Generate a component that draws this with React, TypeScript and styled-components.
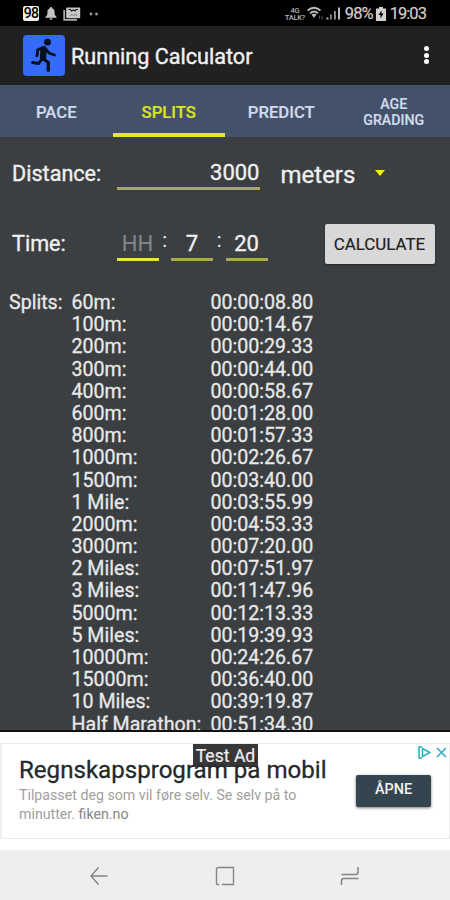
import React from "react";
import styled, { createGlobalStyle } from "styled-components";

const GlobalStyle = createGlobalStyle`
  * { box-sizing: border-box; }
  body { margin: 0; font-family: Roboto, "Liberation Sans", sans-serif; background: #3b3e41; }
`;

const Screen = styled.div`
  width: 450px;
  height: 900px;
  display: flex;
  flex-direction: column;
  overflow: hidden;
  background: #3b3f42;
  color: #f0f0f0;
`;

const StatusBar = styled.div`
  height: 26px;
  flex: none;
  display: flex;
  align-items: center;
  justify-content: space-between;
  padding: 1px 24px 0 23px;
  background: #000;
  color: #cfcfcf;
`;

const StatusGroup = styled.div<{ $gap: number }>`
  display: flex;
  align-items: center;
  gap: ${(p) => p.$gap}px;
`;

const BatteryBadge = styled.span`
  width: 16px;
  height: 15px;
  border-radius: 2px;
  background: #eee;
  color: #000;
  font: 500 14px/15px Roboto, sans-serif;
  text-align: center;
  letter-spacing: -0.6px;
`;

const StatusText = styled.span`
  font-size: 16.5px;
  line-height: 24px;
  letter-spacing: -0.95px;
  -webkit-text-stroke: 0.2px;
`;

const Volte = styled.span`
  display: flex;
  flex-direction: column;
  align-items: center;
  width: 18px;
  font-size: 7.5px;
  font-weight: 500;
  line-height: 7px;
  letter-spacing: -0.3px;
  color: #b5b5b5;
`;

const AppBar = styled.header`
  height: 59px;
  flex: none;
  display: flex;
  align-items: center;
  padding: 0 21px 1px 23px;
  background: #212121;
`;

const AppIcon = styled.div`
  width: 42px;
  height: 41px;
  border-radius: 4px;
  background: #346bfa;
`;

const Title = styled.h1`
  flex: 1;
  margin: 0 0 0 6px;
  font-size: 21.6px;
  font-weight: 400;
  line-height: 30px;
  -webkit-text-stroke: 0.4px;
  padding-top: 3px;
`;

const MoreButton = styled.button`
  display: flex;
  flex-direction: column;
  gap: 1.5px;
  padding: 0;
  border: 0;
  background: none;
`;

const Dot = styled.span`
  width: 5px;
  height: 5px;
  border-radius: 50%;
  background: #fff;
`;

const Tabs = styled.nav`
  height: 52px;
  flex: none;
  display: grid;
  grid-template-columns: repeat(4, 1fr);
  background: #43526a;
`;

const Tab = styled.button<{ $active?: boolean; $small?: boolean }>`
  border: 0;
  border-bottom: 4px solid ${(p) => (p.$active ? "#e9e91c" : "transparent")};
  padding: ${(p) => (p.$small ? 6 : 7)}px 0 0;
  background: none;
  color: ${(p) => (p.$active ? "#dce229" : "#cfdaea")};
  font: 500 ${(p) => (p.$small ? "14.2px/16px" : "16.7px/20px")} Roboto, sans-serif;
  -webkit-text-stroke: 0.2px;
`;

const Form = styled.section`
  height: 155px;
  flex: none;
  display: flex;
  flex-direction: column;
`;

const FormRow = styled.div<{ $height: number }>`
  height: ${(p) => p.$height}px;
  display: flex;
  align-items: center;
  padding-left: 12px;
`;

const Label = styled.label`
  width: 104.5px;
  padding-top: 1px;
  font-size: 21.6px;
  line-height: 26px;
  -webkit-text-stroke: 0.35px;
`;

const Field = styled.div<{ $width: number; $align?: string; $focused?: boolean; $hint?: boolean }>`
  width: ${(p) => p.$width}px;
  height: 34px;
  border-bottom: ${(p) => (p.$focused ? "3px solid #e9e63b" : "3px solid #a8aa50")};
  color: ${(p) => (p.$hint ? "#85888a" : "#f0f0f0")};
  font-size: 22px;
  line-height: 34px;
  text-align: ${(p) => p.$align || "center"};
  -webkit-text-stroke: ${(p) => (p.$hint ? "0" : "0.35px")};
`;

const Colon = styled.span`
  width: 12.5px;
  padding-bottom: 7px;
  font-size: 20px;
  text-align: center;
`;

const UnitSelect = styled.div`
  display: flex;
  align-items: center;
  gap: 20px;
  margin-left: 21px;
  padding-top: 3px;
  font-size: 24px;
  line-height: 30px;
  -webkit-text-stroke: 0.3px;
`;

const Caret = styled.span`
  margin-top: -3px;
  border: 5.5px solid transparent;
  border-top: 6px solid #f2ee18;
  border-bottom: 0;
`;

const Calculate = styled.button`
  width: 110px;
  height: 40px;
  margin-left: 57px;
  padding: 0;
  border: 0;
  border-radius: 2px;
  background: #d7d8d7;
  box-shadow: 0 1px 2px #24282a;
  color: #222;
  font: 400 16.9px/40px Roboto, sans-serif;
  -webkit-text-stroke: 0.2px;
`;

const Splits = styled.section`
  flex: none;
  height: 440px;
  overflow: hidden;
  display: flex;
  border-bottom: 2px solid #101112;
  font-size: 19.6px;
  color: #e8e8e8;
  -webkit-text-stroke: 0.3px;
`;

const SplitsLabel = styled.div`
  width: 71.5px;
  flex: none;
  padding-left: 9px;
  line-height: 22.2px;
`;

const SplitTable = styled.dl`
  margin: 0;
  display: grid;
  grid-template-columns: 139px auto;
  grid-auto-rows: 22.2px;
  line-height: 22.2px;
`;

const Distance = styled.dt`
  white-space: nowrap;
`;

const Duration = styled.dd`
  margin: 0;
`;

const AdSlot = styled.aside`
  height: 118px;
  flex: none;
  padding: 11px 0;
  background: #fff;
`;

const Ad = styled.div`
  position: relative;
  height: 96px;
  display: flex;
  align-items: flex-start;
  border: 1px solid #ebebeb;
  border-left: 2px solid #f0f0f0;
  padding: 10px 18px 0 17px;
`;

const AdBody = styled.div`
  flex: 1;
  min-width: 0;
`;

const AdTitle = styled.div`
  color: #24292c;
  font-size: 24.1px;
  line-height: 32px;
  white-space: nowrap;
  -webkit-text-stroke: 0.3px;
`;

const AdText = styled.p`
  margin: 0;
  color: #a0a0a0;
  font-size: 14.2px;
  line-height: 18.5px;
  white-space: nowrap;
`;

const AdDomain = styled.span`
  color: #858585;
`;

const AdAction = styled.button`
  width: 75px;
  height: 32px;
  margin-top: 21px;
  padding: 0 0 3px;
  border: 0;
  border-radius: 2px;
  background: #344550;
  box-shadow: 0 1px 3px #777;
  color: #f5f5f5;
  font: 500 14.4px/28px Roboto, sans-serif;
`;

const TestBadge = styled.div`
  position: absolute;
  left: 191px;
  top: 0;
  width: 65px;
  height: 23px;
  background: rgba(42, 43, 44, 0.94);
  color: #eee;
  font-size: 17.6px;
  line-height: 24px;
  text-align: center;
  white-space: nowrap;
  -webkit-text-stroke: 0.2px;
`;

const AdChoices = styled.div`
  position: absolute;
  right: 2px;
  top: 2px;
  display: flex;
  gap: 5px;
`;

const NavBar = styled.nav`
  flex: 1;
  display: flex;
  justify-content: space-between;
  align-items: center;
  padding: 1px 90px 0 89px;
  background: #eeeeee;
`;

const splits = [
  ["60m:", "00:00:08.80"],
  ["100m:", "00:00:14.67"],
  ["200m:", "00:00:29.33"],
  ["300m:", "00:00:44.00"],
  ["400m:", "00:00:58.67"],
  ["600m:", "00:01:28.00"],
  ["800m:", "00:01:57.33"],
  ["1000m:", "00:02:26.67"],
  ["1500m:", "00:03:40.00"],
  ["1 Mile:", "00:03:55.99"],
  ["2000m:", "00:04:53.33"],
  ["3000m:", "00:07:20.00"],
  ["2 Miles:", "00:07:51.97"],
  ["3 Miles:", "00:11:47.96"],
  ["5000m:", "00:12:13.33"],
  ["5 Miles:", "00:19:39.93"],
  ["10000m:", "00:24:26.67"],
  ["15000m:", "00:36:40.00"],
  ["10 Miles:", "00:39:19.87"],
  ["Half Marathon:", "00:51:34.30"],
];

export default function App() {
  return (
    <Screen>
      <GlobalStyle />
      <StatusBar>
        <StatusGroup $gap={6}>
          <BatteryBadge>98</BatteryBadge>
          <svg width="12" height="13" viewBox="0 0 12 13" fill="#c4c4c4">
            <path d="M6 0a1.2 1.2 0 0 1 1.2 1.3C9 2 9.6 3.3 9.6 5v2.6L11.5 10v.8H.5V10l1.900-2.400V5c0-1.700.6-3 2.400-3.700A1.200 1.200 0 0 1 6 0zM4.500 11.300h3a1.500 1.500 0 0 1-3 0z" />
          </svg>
          <svg width="18" height="14" viewBox="0 0 18 14">
            <path d="M1.200 3v9.800H14" fill="none" stroke="#aaa" strokeWidth="1.800" />
            <rect x="3.200" y=".5" width="14" height="10.800" rx="1" fill="#c8c8c8" />
            <path d="M5.500 2.500h2l1 1.500 1.700-1 1.800 1 1-1.500h2" stroke="#222" strokeWidth="1.200" fill="none" />
            <path d="M6 8.800l2.500-2 2 1 2-1.500 2.500 2.500z" fill="#999" />
          </svg>
          <svg width="14" height="4" viewBox="0 0 14 4" fill="#999">
            <circle cx="4" cy="2" r="1.400" />
            <circle cx="9.500" cy="2" r="1.400" />
          </svg>
        </StatusGroup>
        <StatusGroup $gap={3.5}>
          <Volte>
            <span>4G</span>
            <span>TALK?</span>
          </Volte>
          <svg width="34" height="15" viewBox="0 0 34 15">
            <g fill="none" stroke="#bbb" strokeWidth="1.700">
              <path d="M.5 4.500q6.500-5.500 13 0M3 7.300q4-3.600 8 0" />
            </g>
            <path d="M7 12l-2.500-3.500q2.500-1.700 5 0z" fill="#bbb" />
            <path d="M12.500 9.500v3.500M15 10v3.500" stroke="#555" />
            <g fill="#bbb">
              <rect x="19.500" y="11.500" width="2" height="2" />
              <rect x="23" y="8.500" width="1.800" height="5" fill="#888" />
              <rect x="27" y="5" width="1.800" height="8.500" fill="#999" />
              <rect x="31" y="1.500" width="2" height="12" />
            </g>
          </svg>
          <StatusText>98%</StatusText>
          <svg width="10" height="14" viewBox="0 0 10 14">
            <path d="M3 0h4v1.500h3V14H0V1.500h3z" fill="#d0d0d0" />
            <path d="M5.500 3.500L2.500 8h2v3.500l3-5h-2z" fill="#000" />
          </svg>
          <StatusText>19:03</StatusText>
        </StatusGroup>
      </StatusBar>

      <AppBar>
        <AppIcon>
          <svg width="42" height="41" viewBox="0 0 42 41">
            <circle cx="24.500" cy="7.200" r="3.400" fill="#07101f" />
            <g fill="none" stroke="#07101f" strokeLinecap="round" strokeLinejoin="round">
              <path d="M20.500 14.200L20 23" strokeWidth="6.200" />
              <path d="M19.500 12.800l-4.800 2-.7 6" strokeWidth="2.800" />
              <path d="M22 13.500l4 4.500 5.500 2" strokeWidth="2.800" />
              <path d="M20.500 24l4.800 3.500v7.700" strokeWidth="3.400" />
              <path d="M18.800 24l-3 4.500-6.300-1" strokeWidth="2.800" />
            </g>
          </svg>
        </AppIcon>
        <Title>Running Calculator</Title>
        <MoreButton aria-label="More options">
          <Dot />
          <Dot />
          <Dot />
        </MoreButton>
      </AppBar>

      <Tabs>
        <Tab>PACE</Tab>
        <Tab $active>SPLITS</Tab>
        <Tab>PREDICT</Tab>
        <Tab $small>
          AGE
          <br />
          GRADING
        </Tab>
      </Tabs>

      <Form>
        <FormRow $height={72}>
          <Label>Distance:</Label>
          <Field $width={143} $align="right">3000</Field>
          <UnitSelect>
            meters
            <Caret />
          </UnitSelect>
        </FormRow>
        <FormRow $height={69}>
          <Label>Time:</Label>
          <Field $width={42} $focused $hint>HH</Field>
          <Colon>:</Colon>
          <Field $width={42}>7</Field>
          <Colon>:</Colon>
          <Field $width={42}>20</Field>
          <Calculate>CALCULATE</Calculate>
        </FormRow>
      </Form>

      <Splits>
        <SplitsLabel>Splits:</SplitsLabel>
        <SplitTable>
          {splits.map(([distance, time]) => (
            <React.Fragment key={distance}>
              <Distance>{distance}</Distance>
              <Duration>{time}</Duration>
            </React.Fragment>
          ))}
        </SplitTable>
      </Splits>

      <AdSlot>
        <Ad>
          <AdBody>
            <AdTitle>Regnskapsprogram på mobil</AdTitle>
            <AdText>
              Tilpasset deg som vil føre selv. Se selv på to
              <br />
              minutter. <AdDomain>fiken.no</AdDomain>
            </AdText>
          </AdBody>
          <AdAction>ÅPNE</AdAction>
          <TestBadge>Test Ad</TestBadge>
          <AdChoices>
            <svg width="13" height="13" viewBox="0 0 13 13" fill="none" stroke="#2babc0" strokeWidth="1.500">
              <path d="M4 1H1v11h3M4.500 2.500v8L12 6.500z" />
            </svg>
            <svg width="11" height="13" viewBox="0 0 11 13" fill="none" stroke="#2babc0" strokeWidth="1.500">
              <path d="M1 2l9 9M10 2l-9 9" />
            </svg>
          </AdChoices>
        </Ad>
      </AdSlot>

      <NavBar>
        <svg width="20" height="20" viewBox="0 0 20 20" fill="none" stroke="#858585" strokeWidth="1.400">
          <path d="M18.500 10H2M9.500 1.500L2 10l7.500 8.500" />
        </svg>
        <svg width="20" height="20" viewBox="0 0 20 20" fill="none" stroke="#858585" strokeWidth="1.400">
          <path d="M4 18.500H2.500q-1 0-1-1v-14q0-2 2-2h15v17H7" />
        </svg>
        <svg width="20" height="20" viewBox="0 0 20 20" fill="none" stroke="#858585" strokeWidth="1.500">
          <path d="M1.500 8.500h14q2.500 0 2.500-2.500V1M18.500 12.500H4Q1.500 12.500 1.500 15v4" />
        </svg>
      </NavBar>
    </Screen>
  );
}
